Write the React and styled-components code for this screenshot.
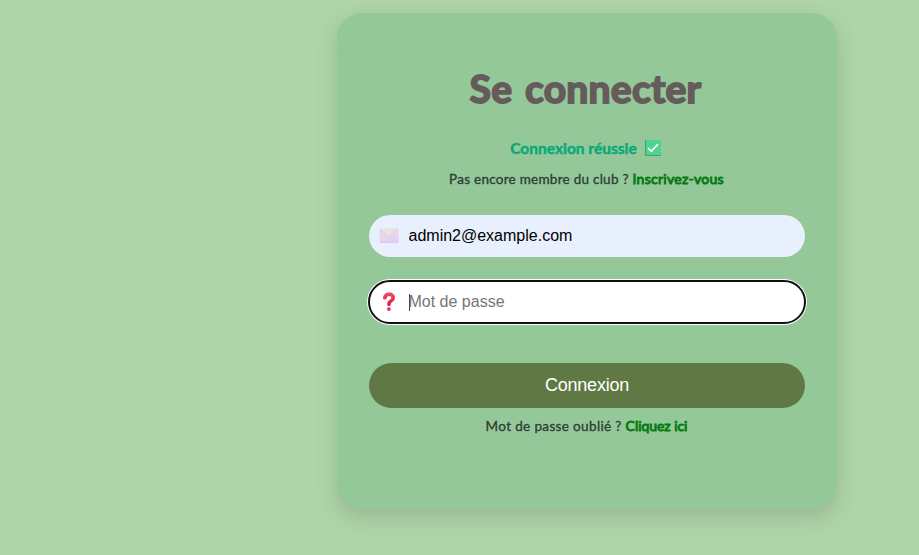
import React from "react";
import styled, { createGlobalStyle, css } from "styled-components";

const GlobalStyle = createGlobalStyle`
  *, *::before, *::after { box-sizing: border-box; }
  body { margin: 0; background: #add5a7; overflow: hidden; font-family: "Liberation Sans", Arial, sans-serif; }
`;

const Page = styled.main`
  height: 555px;
  padding: 13px 0 0 337px;
  background: #add5a7;
`;

const Card = styled.form`
  width: 500px;
  height: 496px;
  padding: 47px 32px 0;
  display: flex;
  flex-direction: column;
  border-radius: 25px;
  background: #94c898;
  box-shadow: 0 8px 20px rgba(102, 91, 91, 0.25);
`;

const Title = styled.h1`
  margin: 0 3px 0 0;
  height: 56px;
  line-height: 56px;
  text-align: center;
  white-space: nowrap;
  font-family: "Lato", "Liberation Sans", sans-serif;
  font-size: 39px;
  font-weight: 700;
  letter-spacing: 0.25px;
  word-spacing: 3px;
  color: #665b5b;
  -webkit-text-stroke: 1.8px #665b5b;
  stroke-linejoin: round;
`;

const Status = styled.p`
  margin: 18px 3px 0 0;
  height: 27px;
  display: flex;
  align-items: center;
  justify-content: center;
  gap: 8px;
  font-family: "Lato", "Liberation Sans", sans-serif;
  font-size: 15.5px;
  font-weight: 700;
  letter-spacing: 0;
  color: #08a87a;

  span { -webkit-text-stroke: 0.4px #08a87a; }
`;

const Hint = styled.p`
  margin: ${({ $top }) => $top}px 1px 0 0;
  height: 24px;
  line-height: 24px;
  text-align: center;
  white-space: pre;
  font-family: "Lato", "Liberation Sans", sans-serif;
  font-size: 13.5px;
  letter-spacing: ${({ $spacing }) => $spacing}px;
  color: #2d3a36;
  -webkit-text-stroke: 0.3px #2d3a36;
`;

const HintLink = styled.a`
  font-size: 14px;
  color: #067a12;
  letter-spacing: ${({ $spacing }) => $spacing}px;
  -webkit-text-stroke: 0.9px #067a12;
`;

const Field = styled.label`
  height: 42px;
  margin-top: 24px;
  padding-left: 10px;
  display: flex;
  align-items: center;
  border-radius: 21px;
  background: #e8f0fe;

  ${({ $focused }) =>
    $focused &&
    css`
      height: 44px;
      margin: 23px -1px -1px;
      padding-left: 9px;
      border: 2px solid #101010;
      border-radius: 22px;
      background: #fff;
      box-shadow: 0 0 0 1px #fff;
    `}
`;

const IconSlot = styled.span`
  width: 20px;
  height: 20px;
  display: flex;
  margin-right: 9.5px;
`;

const Input = styled.input`
  flex: 1;
  min-width: 0;
  height: 24px;
  padding: 0;
  border: 0;
  outline: 0;
  background: transparent;
  font: 16px "Liberation Sans", Arial, sans-serif;
  color: #000;
  &::placeholder { color: #757575; opacity: 1; }
`;

const Caret = styled.i`
  width: 1px;
  height: 17px;
  margin-right: -1px;
  background: #444;
`;

const Submit = styled.button`
  height: 45px;
  margin-top: 40px;
  padding: 0;
  border: 0;
  border-radius: 22.5px;
  background: #607843;
  color: #fff;
  font: 18px "Liberation Sans", Arial, sans-serif;
  letter-spacing: -0.22px;
`;

const CheckIcon = () => (
  <svg width="16" height="16" viewBox="0 0 16 16">
    <rect width="16" height="16" rx="1" fill="#35a66b" />
    <rect x="1" width="15" height="15" rx="1" fill="#50d392" />
    <path d="m3 8 3.3 3.3 6.7-7.3" fill="none" stroke="#fff" strokeWidth="1.6" />
  </svg>
);

const EnvelopeIcon = () => (
  <svg width="20" height="20" viewBox="0 0 20 20">
    <defs>
      <linearGradient id="paper" x2="0.3" y2="1">
        <stop stopColor="#e7dee3" />
        <stop offset="1" stopColor="#e5d0f3" />
      </linearGradient>
    </defs>
    <rect x="0.5" y="2.5" width="19" height="14" rx="0.8" fill="url(#paper)" />
    <path d="m1 16 7-6m11 6-7-6" stroke="#dccde5" strokeWidth="0.7" />
    <path d="m1 3 7.8 7q1.2.9 2.4 0L19 3" fill="#eae1e7" stroke="#d3c6d8" strokeWidth="0.7" />
    <path d="M1 16.3h18" stroke="#d6b7ee" strokeWidth="0.7" />
  </svg>
);

const QuestionIcon = () => (
  <svg width="20" height="20" viewBox="0 0 20 20">
    <defs>
      <linearGradient id="mark" x2="0" y2="1">
        <stop stopColor="#f34b70" />
        <stop offset="1" stopColor="#df1838" />
      </linearGradient>
    </defs>
    <path
      d="M4 6C4.2 2.4 6.8.4 10.1.4c3.4 0 5.9 2 5.9 5.2 0 2.3-1.3 3.6-2.9 4.6-1.1.7-1.4 1.2-1.4 2.1 0 1.2-.7 1.9-1.8 1.9s-1.7-.8-1.7-2c0-2.1 1-3.3 2.6-4.4 1-.6 1.5-1.1 1.5-2 0-1.2-.8-1.9-2.2-1.9-1.3 0-2 .8-2.3 2.1-.3 1.1-1 1.6-2.1 1.4C4.5 7.3 3.9 6.8 4 6Z"
      fill="url(#mark)"
    />
    <circle cx="9.9" cy="17.1" r="1.9" fill="#ee3155" />
  </svg>
);

export default function App() {
  return (
    <>
      <GlobalStyle />
      <Page>
        <Card onSubmit={(event) => event.preventDefault()}>
          <Title>Se connecter</Title>
          <Status>
            <span>Connexion réussie</span>
            <CheckIcon />
          </Status>
          <Hint $top={6} $spacing={0.26}>
            Pas encore membre du club ? <HintLink $spacing={0.28}>Inscrivez-vous</HintLink>
          </Hint>
          <Field>
            <IconSlot><EnvelopeIcon /></IconSlot>
            <Input type="email" aria-label="Email" defaultValue="admin2@example.com" />
          </Field>
          <Field $focused>
            <IconSlot><QuestionIcon /></IconSlot>
            <Caret />
            <Input type="password" placeholder="Mot de passe" />
          </Field>
          <Submit type="submit">Connexion</Submit>
          <Hint $top={6} $spacing={0.36}>
            Mot de passe oublié ? <HintLink $spacing={-0.05}>Cliquez ici</HintLink>
          </Hint>
        </Card>
      </Page>
    </>
  );
}
